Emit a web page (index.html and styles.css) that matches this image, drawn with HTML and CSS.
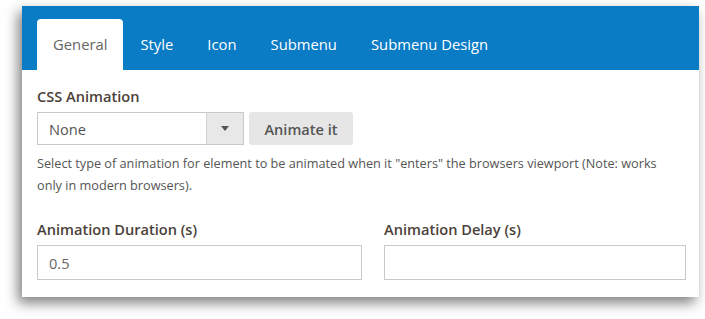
FILE: index.html
```html
<!DOCTYPE html>
<html>
<head>
<meta charset="utf-8">
<link rel="stylesheet" href="styles.css">
</head>
<body>
<div class="panel">
  <div class="tabs">
    <div class="tab active">General</div>
    <div class="tab">Style</div>
    <div class="tab">Icon</div>
    <div class="tab">Submenu</div>
    <div class="tab">Submenu Design</div>
  </div>
  <div class="content">
    <div class="label">CSS Animation</div>
    <div class="select-row">
      <div class="select">
        <span class="select-value">None</span>
        <span class="select-arrow"><svg width="8" height="5" viewBox="0 0 8 5"><path d="M0 0H8L4 5Z" fill="#555"/></svg></span>
      </div>
      <div class="btn">Animate it</div>
    </div>
    <p class="help">Select type of animation for element to be animated when it "enters" the browsers viewport (Note: works only in modern browsers).</p>
    <div class="fields">
      <div class="field">
        <div class="label">Animation Duration (s)</div>
        <div class="input">0.5</div>
      </div>
      <div class="field">
        <div class="label">Animation Delay (s)</div>
        <div class="input"></div>
      </div>
    </div>
  </div>
</div>
</body>
</html>
```
FILE: styles.css
```css
html, body {
  margin: 0;
  padding: 0;
  background: #ffffff;
}
body {
  font-family: "Open Sans", "Noto Sans", sans-serif;
  padding: 6px 6px 22px 22px;
}
.panel {
  width: 677px;
  height: 291px;
  background: #fff;
  box-shadow: -4px 6px 12px rgba(0,0,0,0.5);
}
.tabs {
  height: 64px;
  background: #0a7bc5;
  display: flex;
  align-items: flex-end;
  padding-left: 15px;
  box-sizing: border-box;
}
.tab {
  height: 51px;
  padding: 0 17px 1px 17px;
  display: flex;
  align-items: center;
  font-size: 14.8px;
  color: #ffffff;
  box-sizing: border-box;
  white-space: nowrap;
}
.tab.active {
  background: #fff;
  color: #666;
  border-radius: 4px 4px 0 0;
  padding: 0 16px 1px 16px;
}
.content {
  padding: 16px 13px 0 15px;
}
.label {
  font-size: 14.6px;
  font-weight: 600;
  color: #4b3f3a;
  line-height: 20px;
}
.select-row {
  display: flex;
  gap: 5px;
  margin-top: 6px;
}
.select {
  width: 207px;
  height: 33px;
  box-sizing: border-box;
  border: 1px solid #c9c9c9;
  display: flex;
  align-items: stretch;
}
.select-value {
  flex: 1;
  display: flex;
  align-items: center;
  padding-left: 11px;
  font-size: 14.6px;
  color: #555;
}
.select-arrow {
  width: 36px;
  background: #e8e8e8;
  border-left: 1px solid #d4d4d4;
  display: flex;
  align-items: center;
  justify-content: center;
}
.btn {
  width: 104px;
  height: 33px;
  background: #e6e6e6;
  border-radius: 3px;
  display: flex;
  align-items: center;
  justify-content: center;
  font-size: 14.6px;
  font-weight: 600;
  color: #555;
}
.help {
  margin: 7px 0 0 0;
  font-size: 12.7px;
  line-height: 22px;
  color: #555;
  width: 630px;
}
.fields {
  display: grid;
  grid-template-columns: 325px 302px;
  column-gap: 22px;
  margin-top: 23px;
}
.field .input {
  margin-top: 6px;
  height: 35px;
  box-sizing: border-box;
  border: 1px solid #c9c9c9;
  display: flex;
  align-items: center;
  padding-left: 11px;
  font-size: 14.6px;
  color: #666;
}
```
